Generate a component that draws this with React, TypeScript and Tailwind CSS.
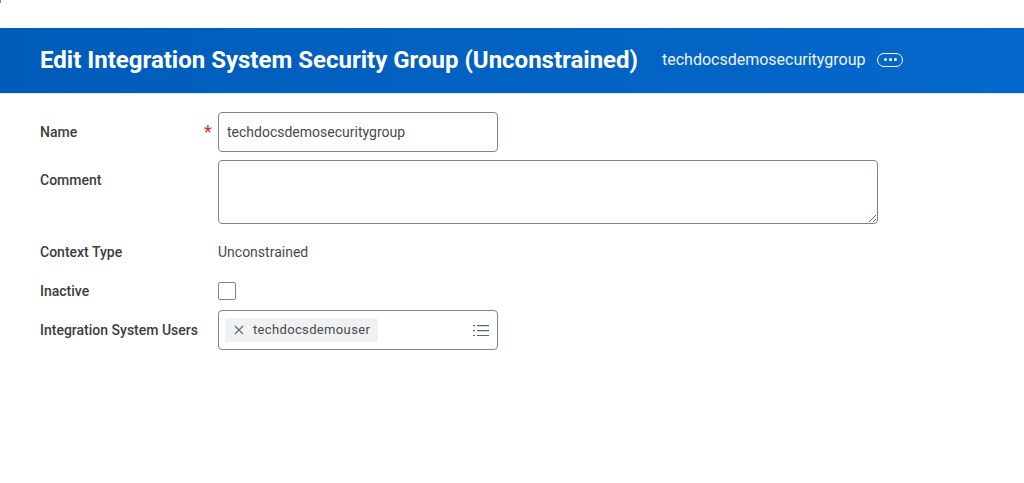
export default function App() {
  return (
    <div className="relative h-[483px] overflow-hidden bg-white pt-[28px] font-['Roboto',sans-serif] text-[#494949]">
      {/* corner speck from the original capture */}
      <span className="absolute left-0 top-0 h-[3px] w-[1px] bg-[#8a8a8a]" />

      {/* Header */}
      <div className="flex h-[66px] items-center border-b border-[#dfe6ee] bg-gradient-to-r from-[#005cb9] to-[#0568cc] pb-[2px] pl-[40px] text-white">
        <h1 className="text-[24px] font-bold leading-[30px]">Edit Integration System Security Group (Unconstrained)</h1>
        <span className="ml-[24px] text-[16px] text-[#eef4fb]">techdocsdemosecuritygroup</span>
        <button className="ml-[12px] flex h-[14px] w-[26px] items-center justify-center gap-[2px] rounded-full border border-white">
          <span className="h-[3px] w-[3px] rounded-full bg-white" />
          <span className="h-[3px] w-[3px] rounded-full bg-white" />
          <span className="h-[3px] w-[3px] rounded-full bg-white" />
        </button>
      </div>

      {/* Form */}
      <div className="flex flex-col pl-[40px] pt-[18px] text-[14px]">
        <div className="flex items-center">
          <label className="w-[178px] font-medium text-[#3d3d3d]">Name</label>
          <span className="relative">
            <span className="absolute left-[-14px] top-[8px] text-[18px] leading-[24px] text-[#e8281c]">*</span>
            <input
              defaultValue="techdocsdemosecuritygroup"
              className="block h-[40px] w-[280px] rounded-[4px] border border-[#7b858f] px-[8px] text-[14px] text-[#494949] outline-none"
            />
          </span>
        </div>

        <div className="mt-[8px] flex items-start">
          <label className="w-[178px] pt-[10px] font-medium text-[#3d3d3d]">Comment</label>
          <textarea className="block h-[64px] w-[660px] rounded-[4px] border border-[#7b858f] px-[8px] py-[8px] outline-none" />
        </div>

        <div className="mt-[18px] flex h-[20px] items-center">
          <label className="w-[178px] font-medium text-[#3d3d3d]">Context Type</label>
          <span>Unconstrained</span>
        </div>

        <div className="mt-[20px] flex h-[18px] items-center">
          <label className="w-[178px] font-medium text-[#3d3d3d]">Inactive</label>
          <span className="h-[18px] w-[18px] rounded-[2px] border border-[#7b858f]" />
        </div>

        <div className="mt-[10px] flex items-center">
          <label className="w-[178px] font-medium text-[#3d3d3d]">Integration System Users</label>
          <div className="flex h-[40px] w-[280px] items-center justify-between rounded-[4px] border border-[#7b858f] pl-[6px] pr-[8px]">
            <span className="flex h-[24px] items-center rounded-[2px] bg-[#f0f1f2] pl-[8px] pr-[8px] text-[13px] tracking-[0.35px]">
              <svg width="12" height="12" viewBox="0 0 12 12" className="mr-[8px] text-[#5e6a75]" fill="none" stroke="currentColor" strokeWidth="1.1">
                <path d="M2 2l8 8M10 2l-8 8" />
              </svg>
              techdocsdemouser
            </span>
            <svg width="16" height="12" viewBox="0 0 16 12" className="text-[#5e6a75]" stroke="currentColor" strokeWidth="1.25" fill="none">
              <path d="M0 1.5h2M4 1.5h12M0 6.5h2M4 6.5h12M0 11.5h2M4 11.5h12" />
            </svg>
          </div>
        </div>
      </div>
    </div>
  );
}
